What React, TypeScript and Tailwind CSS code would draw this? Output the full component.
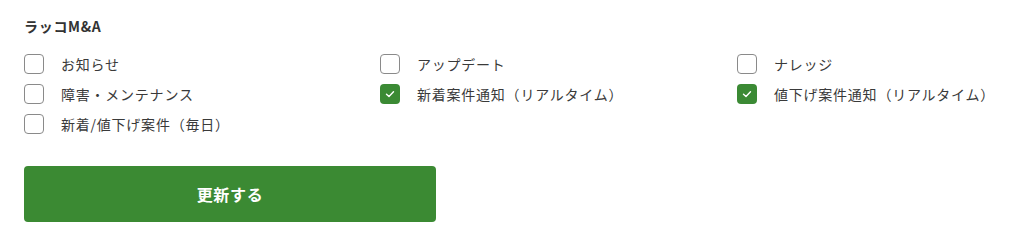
import { useState } from "react";

const options = [
  { label: "お知らせ", checked: false },
  { label: "アップデート", checked: false },
  { label: "ナレッジ", checked: false },
  { label: "障害・メンテナンス", checked: false },
  { label: "新着案件通知（リアルタイム）", checked: true },
  { label: "値下げ案件通知（リアルタイム）", checked: true },
  { label: "新着/値下げ案件（毎日）", checked: false },
];

export default function App() {
  const [values, setValues] = useState(options.map((o) => o.checked));

  const toggle = (i: number) =>
    setValues((v) => v.map((x, j) => (j === i ? !x : x)));

  return (
    <div
      className="bg-white w-[1024px] h-[242px] pl-6 pt-4 text-[#333]"
      style={{ fontFamily: '"Noto Sans CJK JP", "Noto Sans", sans-serif' }}
    >
      <h2 className="text-[14px] leading-5 font-bold tracking-[0.05em]">ラッコM&amp;A</h2>

      <div className="mt-[18px] grid grid-cols-[356px_357px_1fr] gap-y-[10px]">
        {options.map((o, i) => (
          <label
            key={o.label}
            className="flex items-center h-5 cursor-pointer"
            onClick={() => toggle(i)}
          >
            {values[i] ? (
              <span className="w-5 h-5 rounded-[4px] bg-[#3b8a34] flex items-center justify-center">
                <svg width="12" height="12" viewBox="0 0 12 12" fill="none">
                  <path
                    d="M2.5 6.2 L5 8.5 L9.5 3.8"
                    stroke="white"
                    strokeWidth="1.4"
                    strokeLinecap="round"
                    strokeLinejoin="round"
                  />
                </svg>
              </span>
            ) : (
              <span className="w-5 h-5 rounded-[4px] border-[1.5px] border-[#8a8a8a] bg-white" />
            )}
            <span className="ml-[17px] text-[14px] leading-5 tracking-[0.055em] text-[#3a3a3a]">
              {o.label}
            </span>
          </label>
        ))}
      </div>

      <button className="mt-8 w-[412px] h-14 rounded-[4px] bg-[#3b8a33] text-white text-[16px] font-bold tracking-[0.04em]">
        更新する
      </button>
    </div>
  );
}
